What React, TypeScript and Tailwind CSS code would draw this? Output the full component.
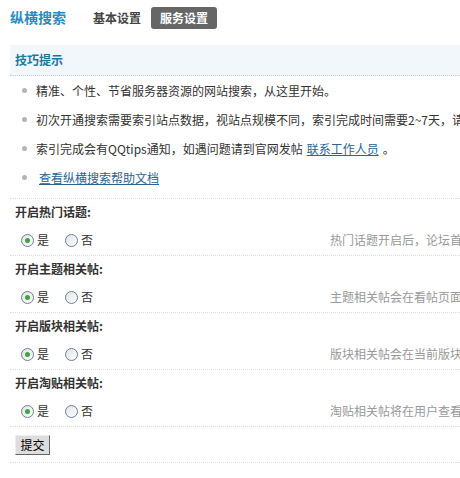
import React from 'react';

const tips = [
  '精准、个性、节省服务器资源的网站搜索，从这里开始。',
  '初次开通搜索需要索引站点数据，视站点规模不同，索引完成时间需要2~7天，请耐心等待。',
];

const settings = [
  { label: '开启热门话题:', hint: '热门话题开启后，论坛首页将显示热门话题搜索' },
  { label: '开启主题相关帖:', hint: '主题相关帖会在看帖页面显示相关主题' },
  { label: '开启版块相关帖:', hint: '版块相关帖会在当前版块显示相关主题' },
  { label: '开启淘贴相关帖:', hint: '淘贴相关帖将在用户查看淘贴时显示' },
];

const Radio = ({ checked }: { checked?: boolean }) => (
  <span className="inline-flex h-[13px] w-[13px] items-center justify-center rounded-full border border-[#6d7f93] bg-gradient-to-br from-[#dfe3e8] to-[#ffffff]">
    {checked && <span className="h-[5px] w-[5px] rounded-full bg-[#3fa53f]" />}
  </span>
);

const Dot = () => <span className="ml-[12px] mr-[9px] h-[5px] w-[5px] shrink-0 rounded-full bg-[#b5b5b5]" />;

const App: React.FC = () => {
  return (
    <div
      className="h-[478px] w-[460px] overflow-hidden bg-white text-[12px] text-[#333]"
      style={{ fontFamily: '"Noto Sans CJK SC", "Noto Sans", sans-serif' }}
    >
      {/* header tabs */}
      <div className="flex h-[35px] items-center whitespace-nowrap pl-[10px]">
        <span className="text-[14px] font-bold text-[#2b8bc0]">纵横搜索</span>
        <span className="ml-[27px] font-bold text-[#444]">基本设置</span>
        <span className="ml-[10px] rounded-[3px] bg-[#666] px-[9px] py-[2px] font-bold text-white">服务设置</span>
      </div>

      {/* tips box */}
      <div className="ml-[10px] mt-[10px] whitespace-nowrap">
        <div className="flex h-[31px] items-center border-b border-dotted border-[#ccc] bg-[#f2f7fc] pl-[5px] font-bold text-[#1b7a9c]">
          技巧提示
        </div>
        <ul>
          {tips.map((t) => (
            <li key={t} className="flex h-[29px] items-center">
              <Dot />
              {t}
            </li>
          ))}
          <li className="flex h-[29px] items-center">
            <Dot />
            索引完成会有QQtips通知，如遇问题请到官网发帖
            <a className="ml-[4px] text-[#2a6596] underline">联系工作人员</a>
            <span className="ml-[4px]">。</span>
          </li>
          <li className="flex h-[29px] items-center">
            <Dot />
            <a className="ml-[3px] text-[#2a6596] underline">查看纵横搜索帮助文档</a>
          </li>
        </ul>
      </div>

      {/* settings */}
      <div className="ml-[10px] mt-[6px] whitespace-nowrap">
        {settings.map((s) => (
          <div key={s.label} className="border-t border-dotted border-[#ddd]">
            <div className="flex h-[26px] items-center pl-[5px] font-bold">{s.label}</div>
            <div className="flex h-[30px] items-center">
              <div className="flex w-[320px] shrink-0 items-center">
                <label className="ml-[11px] flex items-center gap-[3px]">
                  <Radio checked />是
                </label>
                <label className="ml-[16px] flex items-center gap-[3px]">
                  <Radio />否
                </label>
              </div>
              <span className="text-[#999]">{s.hint}</span>
            </div>
          </div>
        ))}
        <div className="flex h-[37px] items-center border-y border-dotted border-[#ddd] pl-[5px]">
          <button className="h-[20px] w-[35px] border border-[#666] border-l-[#eee] border-t-[#eee] bg-[#ddd] text-[12px] leading-none text-[#000]">
            提交
          </button>
        </div>
      </div>
    </div>
  );
};

export default App;
